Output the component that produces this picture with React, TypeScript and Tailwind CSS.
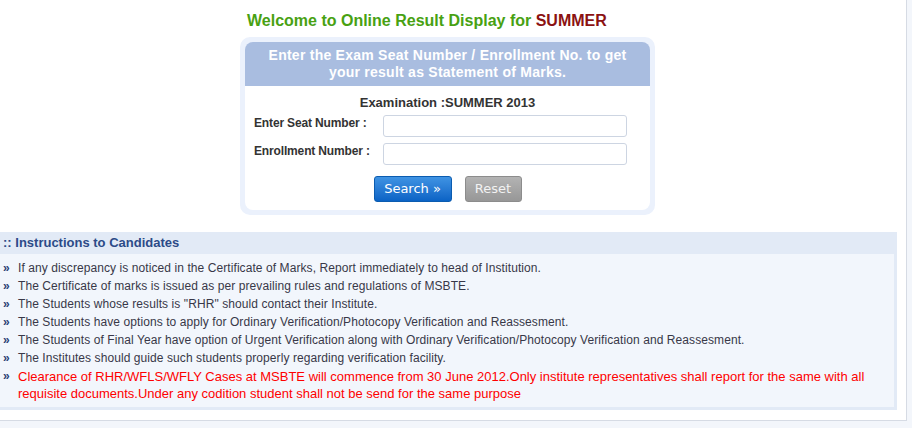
import React from "react";

const items = [
  "If any discrepancy is noticed in the Certificate of Marks, Report immediately to head of Institution.",
  "The Certificate of marks is issued as per prevailing rules and regulations of MSBTE.",
  'The Students whose results is "RHR" should contact their Institute.',
  "The Students have options to apply for Ordinary Verification/Photocopy Verification and Reassesment.",
  "The Students of Final Year have option of Urgent Verification along with Ordinary Verification/Photocopy Verification and Reassesment.",
  "The Institutes should guide such students properly regarding verification facility.",
];

function Bullet() {
  return (
    <span className="w-[18px] shrink-0 pl-[3px] text-[12px] font-bold text-[#2b3f73]">»</span>
  );
}

export default function App() {
  return (
    <div className="w-[912px] h-[428px] overflow-hidden bg-[#f3f6fb] font-['Liberation_Sans',Arial,sans-serif]">
      <div className="w-[907px] h-[421px] bg-white border-r border-b border-[#d6dbe4]">
        <div className="pt-[12px] pl-[247px] text-[16px] leading-[18px] font-bold text-[#48a112]">
          Welcome to Online Result Display for <span className="text-[#8b1212]">SUMMER</span>
        </div>

        <div className="mt-[7px] ml-[240px] w-[415px] rounded-[10px] bg-[#ebf1fc] p-[5px]">
          <div className="h-[44px] rounded-t-[8px] bg-[#a9bde0] pt-[5px] text-center text-[14px] leading-[17px] font-bold tracking-[0.25px] text-white">
            Enter the Exam Seat Number / Enrollment No. to get
            <br />
            your result as Statement of Marks.
          </div>
          <div className="h-[124px] rounded-b-[8px] bg-white pt-[9px]">
            <div className="text-center text-[13px] leading-[16px] font-bold text-[#333333]">
              Examination :SUMMER 2013
            </div>
            <div className="mt-[4px] flex pl-[9px]">
              <div className="w-[129px] pt-[1px] text-[12px] leading-[14px] font-bold tracking-[-0.15px] text-[#333333]">
                Enter Seat Number :
              </div>
              <div className="h-[22px] w-[244px] rounded-[3px] border border-[#cdd5e2] bg-white" />
            </div>
            <div className="mt-[6px] flex pl-[9px]">
              <div className="w-[129px] pt-[1px] text-[12px] leading-[14px] font-bold tracking-[-0.15px] text-[#333333]">
                Enrollment Number :
              </div>
              <div className="h-[22px] w-[244px] rounded-[3px] border border-[#cdd5e2] bg-white" />
            </div>
            <div className="mt-[11px] flex justify-center gap-[13px] font-['DejaVu_Sans',sans-serif] text-[13px]">
              <button className="h-[26px] w-[78px] rounded-[3px] border border-[#0b5cb0] bg-gradient-to-b from-[#3f93e3] to-[#0a63c5] text-white leading-[24px]">
                Search »
              </button>
              <button className="h-[26px] w-[57px] rounded-[3px] border border-[#8c8c8c] bg-gradient-to-b from-[#b3b3b3] to-[#979797] text-[#f2f2f2] leading-[24px]">
                Reset
              </button>
            </div>
          </div>
        </div>

        <div className="mt-[17px] w-[897px]">
          <div className="h-[22px] bg-[#e2eaf6] pl-[3px] text-[13px] leading-[22px] font-bold text-[#2c4a88]">
            :: Instructions to Candidates
          </div>
          <div className="h-[156px] border-r-[3px] border-b-[3px] border-[#e2eaf6] bg-[#f2f6fc] pt-[5px]">
            {items.map((t) => (
              <div key={t} className="flex text-[12px] leading-[18px] tracking-[0.08px] text-[#383848]">
                <Bullet />
                <span>{t}</span>
              </div>
            ))}
            <div className="flex pt-[1px] text-[13px] leading-[17px] text-[#ff0000]">
              <Bullet />
              <span>
                Clearance of RHR/WFLS/WFLY Cases at MSBTE will commence from 30 June 2012.Only institute representatives shall report for the same with all requisite documents.Under any codition student shall not be send for the same purpose
              </span>
            </div>
          </div>
        </div>
      </div>
    </div>
  );
}
